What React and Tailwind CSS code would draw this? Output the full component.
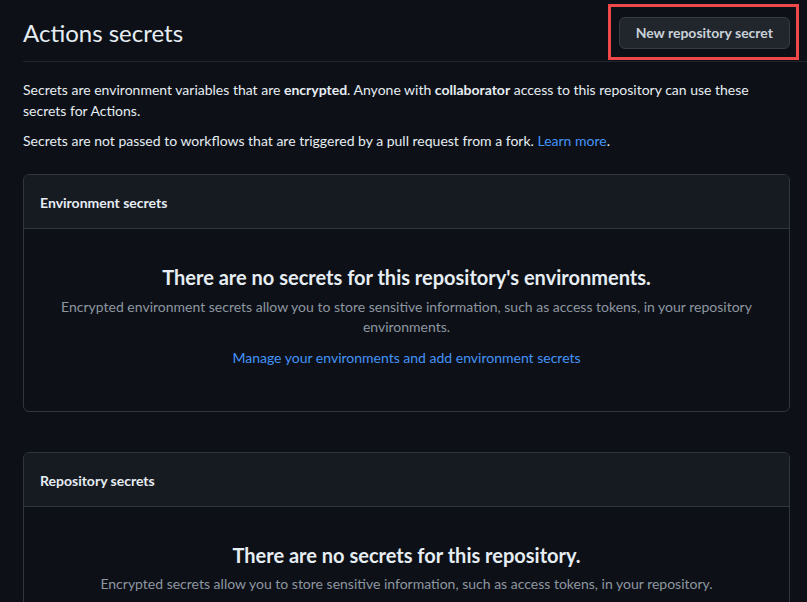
import React from 'react';

const font = { fontFamily: 'Lato, "Liberation Sans", Arial, sans-serif' };

function SecretsBox({ heading, title, children }) {
  return (
    <div className="border border-[#30363d] rounded-md overflow-hidden">
      <div className="bg-[#161b22] border-b border-[#30363d] h-[54px] flex items-center px-4 pt-[2px]">
        <h3 className="text-sm font-bold text-[#e6edf3]">{heading}</h3>
      </div>
      <div className="pt-[33px] pb-[43px] px-8 text-center">
        <h2 className="text-[20px] leading-[30px] font-bold text-[#e6edf3]">{title}</h2>
        {children}
      </div>
    </div>
  );
}

export default function App() {
  return (
    <div className="min-h-screen bg-[#0d1117] text-[#e6edf3] pl-[23px] pr-[17px]" style={font}>
      <div className="flex items-center justify-between pt-[15px] pb-[10px] border-b border-[#21262d] -mr-[17px] pr-[17px]">
        <h1 className="text-2xl leading-9 font-normal">Actions secrets</h1>
        <div className="relative">
          <span className="absolute -left-[11px] -top-[13px] -right-[9px] -bottom-[11px] border-[3px] border-[#f0474a]"></span>
          <button className="h-8 px-4 bg-[#21262d] border border-[#363b42] rounded-md text-sm font-bold text-[#c9d1d9]">
            New repository secret
          </button>
        </div>
      </div>

      <p className="mt-[17px] text-sm leading-[21px]">
        Secrets are environment variables that are <strong>encrypted</strong>. Anyone with <strong>collaborator</strong> access to this repository can use these secrets for Actions.
      </p>
      <p className="mt-[9px] text-sm leading-[21px]">
        Secrets are not passed to workflows that are triggered by a pull request from a fork. <a href="#" className="text-[#4493f8]">Learn more</a>.
      </p>

      <div className="mt-[23px]">
        <SecretsBox
          heading="Environment secrets"
          title="There are no secrets for this repository's environments."
        >
          <p className="mt-[5px] text-sm leading-5 text-[#8d96a0]">
            Encrypted environment secrets allow you to store sensitive information, such as access tokens, in your repository environments.
          </p>
          <a href="#" className="block mt-[11px] text-sm leading-5 text-[#4493f8]">
            Manage your environments and add environment secrets
          </a>
        </SecretsBox>
      </div>

      <div className="mt-[40px]">
        <SecretsBox heading="Repository secrets" title="There are no secrets for this repository.">
          <p className="mt-[4px] text-sm leading-5 text-[#8d96a0]">
            Encrypted secrets allow you to store sensitive information, such as access tokens, in your repository.
          </p>
        </SecretsBox>
      </div>
    </div>
  );
}
